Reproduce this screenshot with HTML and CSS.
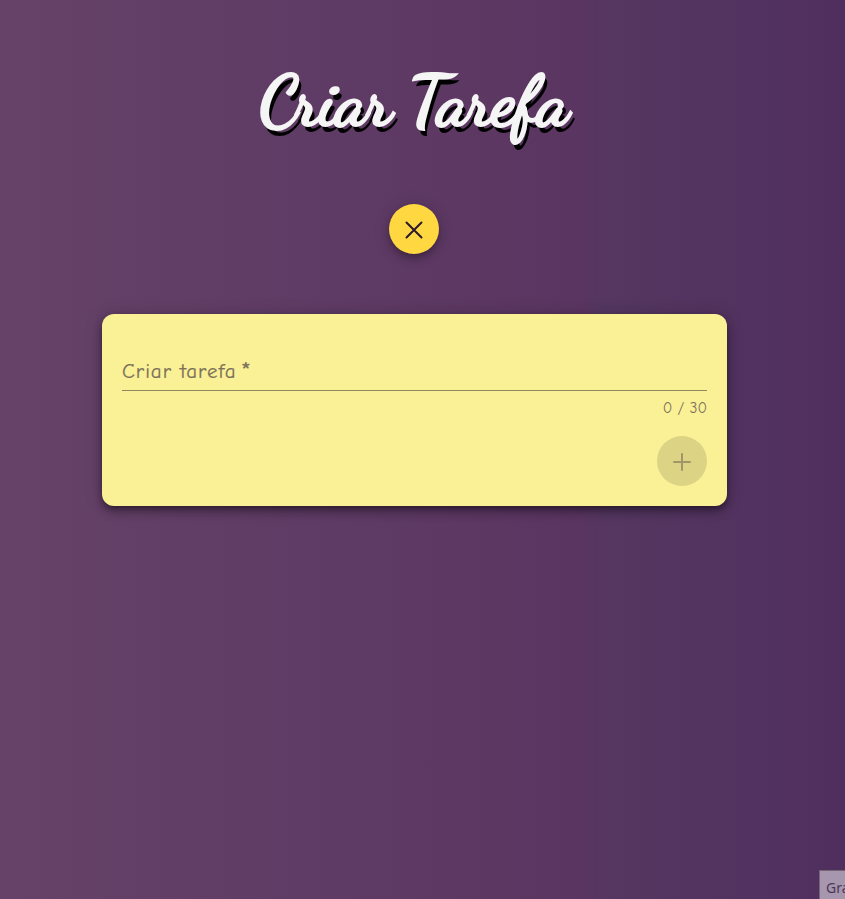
FILE: index.html
```html
<!DOCTYPE html>
<html lang="pt-BR">
<head>
<meta charset="utf-8">
<title>Criar Tarefa</title>
<link rel="stylesheet" href="styles.css">
</head>
<body>
<main class="page">
  <h1 class="title"><span>Criar</span><span>Tarefa</span></h1>
  <button class="fab close" aria-label="Fechar">
    <svg viewBox="0 0 24 24" width="24" height="24"><path d="M4.5 5.5 19.5 20.5M19.5 5.5 4.5 20.5"/></svg>
  </button>
  <form class="card">
    <div class="field"><label class="label"><span>Criar tarefa</span><span class="required">*</span></label></div>
    <div class="hint">0 / 30</div>
    <button class="fab add" disabled aria-label="Adicionar">
      <svg viewBox="0 0 24 24" width="24" height="24"><path d="M12 5V21M4 13H20"/></svg>
    </button>
  </form>
</main>
<div class="tip">Gra</div>
</body>
</html>
```

FILE: styles.css
```css
* { box-sizing: border-box; }
body {
  margin: 0;
  height: 899px;
  overflow: hidden;
  background: linear-gradient(90deg, #664268 0%, #5f3c65 35%, #5a3561 69%, #553761 71%, #502f5f 100%);
  font-family: "Comic Sans MS", "Comic Neue", "Open Sans", sans-serif;
}
.page {
  width: 828px;
  padding-left: 1px;
  display: flex;
  flex-direction: column;
  align-items: center;
}
.title {
  display: flex;
  gap: 17px;
  margin: 57px 2px 0 0;
  height: 147px;
  line-height: 90px;
  font-family: "Dancing Script", "Liberation Serif", serif;
  font-size: 70px;
  letter-spacing: -.8px;
  font-weight: 700;
  color: #f5f5f5;
  -webkit-text-stroke: 2px #f5f5f5;
  text-shadow: 3px 6px 0 #000;
}
.fab {
  display: grid;
  place-items: center;
  width: 50px;
  height: 50px;
  padding: 0;
  border: 0;
  border-radius: 50%;
}
.fab svg { fill: none; stroke: currentColor; stroke-width: 2; stroke-linecap: round; }
.close {
  margin-right: 1px;
  background: #ffd740;
  color: #2a1a2e;
  box-shadow: 0 3px 5px -1px rgba(0,0,0,.2), 0 6px 10px rgba(0,0,0,.14), 0 1px 18px rgba(0,0,0,.12);
}
.card {
  display: flex;
  flex-direction: column;
  width: 625px;
  height: 192px;
  margin-top: 60px;
  padding: 40px 20px 20px;
  border-radius: 12px;
  background: #faf096;
  box-shadow: 0 3px 5px -1px rgba(0,0,0,.3), 0 6px 10px rgba(0,0,0,.24), 0 1px 18px rgba(0,0,0,.2);
}
.field {
  height: 37px;
  border-bottom: 1px solid #8e895b;
}
.label {
  display: flex;
  gap: 4px;
  line-height: 35px;
  font-size: 21px;
  letter-spacing: .95px;
  color: #7b7059;
  -webkit-text-stroke: .2px #7b7059;
}
.required {
  font-size: 27px;
  -webkit-text-stroke: 0;
}
.hint {
  height: 45px;
  padding-top: 6px;
  line-height: 22px;
  text-align: right;
  font-size: 15.7px;
  color: #7b7059;
}
.add {
  align-self: flex-end;
  background: #dcd384;
  color: #a09668;
}
.tip {
  position: fixed;
  left: 819px;
  top: 870px;
  width: 60px;
  height: 36px;
  padding-left: 6px;
  line-height: 33px;
  border: 1px solid #766577;
  background: #a697ae;
  font-family: "Noto Sans", sans-serif;
  font-size: 14px;
  color: #4d3458;
}
```
